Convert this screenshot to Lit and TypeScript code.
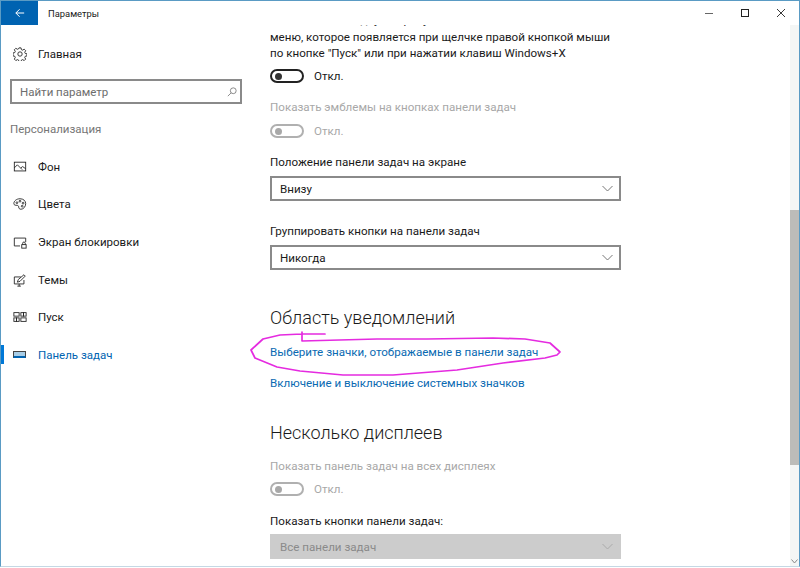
import { LitElement, html, css, svg } from "lit";
import { customElement } from "lit/decorators.js";

const ic = (body: unknown) => html`<svg class="ic" viewBox="0 0 16 16" fill="none" stroke="#222" stroke-width="1">${body}</svg>`;

const navItems = [
  { t: "Фон", i: svg`<rect x="1.500" y="2.500" width="13" height="10"/><path d="M1.500 9 5 5.500 10.500 11M9 9l2-1.500 3.500 2.500"/>` },
  { t: "Цвета", i: svg`<path d="M8 2C4 2 1 4.600 1 7.500c0 2 2 2 3.500 2 1.500 0 2 1 2 2 0 1.500 1 2.500 2.500 2.500 3 0 5.500-3 5.500-6.500C14.500 4.500 12 2 8 2z"/><circle cx="4.500" cy="6.500" r="1"/><circle cx="8" cy="4.800" r="1"/><circle cx="11.500" cy="7" r="1"/><circle cx="10.500" cy="10.500" r="1"/>` },
  { t: "Экран блокировки", i: svg`<path d="M8 12.500H1.500v-9h13V8"/><rect x="10" y="11" width="5" height="4"/><path d="M11 11V9.500a1.500 1.500 0 0 1 3 0V11"/>` },
  { t: "Темы", i: svg`<path d="M9 4.500H1.500v8h11V8M5 15h4M7 12.500V15"/><path d="M5 10.500l1-3 6.500-5.500 1.500 1.500L8 9.500z"/>` },
  { t: "Пуск", i: svg`<rect x="1" y="3" width="6" height="4"/><rect x="9" y="3" width="3" height="4"/><rect x="12" y="3" width="3" height="4"/><rect x="1" y="9" width="3" height="4"/><rect x="4" y="9" width="3" height="4"/><rect x="9" y="9" width="6" height="4"/>` },
];

@customElement("app-root")
export class AppRoot extends LitElement {
  static styles = css`
    :host {
      display: block;
      width: 800px;
      height: 568px;
      overflow: hidden;
      position: relative;
      background: #fff;
      font-family: Roboto, "Open Sans", sans-serif;
      font-size: 11.6px;
      color: #1a1a1a;
    }
    .win {
      box-sizing: border-box;
      height: 567px;
      display: flex;
      flex-direction: column;
      border: 1px solid #5a9bc4;
      border-bottom-color: #c5d8e4;
      overflow: hidden;
    }
    .title { height: 24px; flex: none; display: flex; align-items: center; background: #fff; position: relative; z-index: 1; }
    .back { width: 37px; height: 24px; background: #0063b1; display: flex; align-items: center; justify-content: center; }
    .back svg { width: 10px; height: 10px; }
    .title-text { margin-left: 10px; font-size: 9.4px; flex: 1; }
    .wbtn { width: 36px; height: 24px; display: flex; align-items: center; justify-content: center; }
    .wbtn svg { width: 8px; height: 8px; }
    .body { flex: 1; display: flex; min-height: 0; }
    .side { width: 269px; flex: none; display: flex; flex-direction: column; font-size: 11.5px; }
    .home { display: flex; align-items: center; gap: 11px; margin: 19px 0 0 12px; height: 20px; }
    .ic { width: 14px; height: 14px; flex: none; }
    .search {
      box-sizing: border-box; margin: 15px 0 0 9px; width: 232px; height: 25px;
      border: 2px solid #8a8a8a; display: flex; align-items: center; justify-content: space-between;
      padding: 0 3px 0 8px; color: #6d6d6d;
    }
    .search svg { width: 10px; height: 10px; }
    .group { margin: 16px 0 0 9px; color: #767676; height: 18px; line-height: 18px; }
    .nav { margin-top: 10px; display: flex; flex-direction: column; }
    .item { height: 37.6px; display: flex; align-items: center; gap: 11px; padding-left: 12px; position: relative; }
    .item.on { color: #0063b1; }
    .item.on::before { content: ""; position: absolute; left: -1px; top: 9px; width: 4px; height: 19px; background: #0078d7; }
    .bar-ic { width: 13px; height: 7px; box-sizing: border-box; border: 1px solid #444; border-bottom: 2px solid #0063b1; background: #a8cde6; margin-right: 1px; }
    .main { flex: 1; min-width: 0; overflow: hidden; position: relative; }
    .scroll { width: 352px; margin-top: -13px; display: flex; flex-direction: column; }
    .para { line-height: 16.5px; white-space: nowrap; }
    .toggle { display: flex; align-items: center; gap: 10px; height: 20px; }
    .sw { box-sizing: border-box; width: 34px; height: 14px; border: 2px solid #222; border-radius: 7px; position: relative; }
    .sw::after { content: ""; position: absolute; left: 3px; top: 1.5px; width: 7px; height: 7px; border-radius: 50%; background: #333; }
    .off { color: #a8a8a8; }
    .off .sw { border-color: #b0b0b0; }
    .off .sw::after { background: #a8a8a8; }
    .sel {
      box-sizing: border-box; width: 351px; height: 25px; border: 2px solid #8a8a8a; display: flex; align-items: center;
      justify-content: space-between; padding: 0 6px 0 8px;
    }
    .sel svg { width: 11px; height: 7px; }
    .sel.dis { background: #ccc; border-color: #ccc; color: #8a8a8a; }
    h2 { margin: 0; font-weight: 300; font-size: 18px; line-height: 26px; color: #1a1a1a; }
    a { color: #0a6ab2; text-decoration: none; line-height: 17px; display: block; white-space: nowrap; }
    .m5 { margin-top: 4.75px; } .m6 { margin-top: 5.75px; } .m12 { margin-top: 12.75px; } .m13 { margin-top: 13.75px; }
    .m4 { margin-top: 4.5px; } .m22 { margin-top: 21.75px; } .m35 { margin-top: 35px; } .ml1 { margin-top: 12.5px; }
    .ml2 { margin-top: 14px; } .m28 { margin-top: 28.5px; } .m11 { margin-top: 11.75px; }
    .rail { width: 9px; flex: none; position: relative; background: #f4f6f5; }
    .thumb { position: absolute; left: 0; right: 0; top: 185px; height: 255px; background: #bcbcb9; }
    .rail svg { position: absolute; left: 1px; bottom: 2px; width: 7px; height: 5px; }
    .ink { position: absolute; left: 0; top: 0; width: 800px; height: 568px; pointer-events: none; }
  `;
  render() {
    const chev = (c: string) => html`<svg viewBox="0 0 11 7" fill="none" stroke=${c} stroke-width="1"><path d="M.5 1 5.5 6l5-5"/></svg>`;
    return html`<div class="win">
      <div class="title">
        <div class="back"><svg viewBox="0 0 12 12" fill="none" stroke="#fff" stroke-width="1.200"><path d="M11 6H1M5.500 1.500 1 6l4.500 4.500"/></svg></div>
        <div class="title-text">Параметры</div>
        <div class="wbtn"><svg viewBox="0 0 8 8" stroke="#666"><path d="M0 4.500h8"/></svg></div>
        <div class="wbtn"><svg viewBox="0 0 8 8" fill="none" stroke="#222"><rect x=".5" y=".5" width="7" height="7"/></svg></div>
        <div class="wbtn"><svg viewBox="0 0 8 8" fill="none" stroke="#222" stroke-width=".9"><path d="M0 0l8 8M8 0 0 8"/></svg></div>
      </div>
      <div class="body">
        <div class="side">
          <div class="home">${ic(svg`<circle cx="8" cy="8" r="2.500"/><path d="M6.800 1h2.400l.4 2 1.400.6 1.800-1.100 1.700 1.700-1.100 1.800.6 1.400 2 .4v2.400l-2 .4-.6 1.400 1.100 1.800-1.700 1.700-1.800-1.100-1.400.6-.4 2H6.800l-.4-2-1.400-.6-1.800 1.100-1.700-1.700 1.100-1.800-.6-1.400-2-.4V6.800l2-.4.600-1.400-1.100-1.800 1.700-1.700 1.800 1.100 1.400-.6z"/>`)}<span>Главная</span></div>
          <div class="search"><span>Найти параметр</span><svg viewBox="0 0 12 12" fill="none" stroke="#777"><circle cx="7.500" cy="4.500" r="3.500"/><path d="M5 7 1 11"/></svg></div>
          <div class="group">Персонализация</div>
          <div class="nav">
            ${navItems.map((n) => html`<div class="item">${ic(n.i)}<span>${n.t}</span></div>`)}
            <div class="item on"><div class="bar-ic"></div><span>Панель задач</span></div>
          </div>
        </div>
        <div class="main">
          <div class="scroll">
            <div class="para">Заменить командную строку оболочкой Windows PowerShell в<br>меню, которое появляется при щелчке правой кнопкой мыши<br>по кнопке "Пуск" или при нажатии клавиш Windows+X</div>
            <div class="toggle m4"><div class="sw"></div>Откл.</div>
            <div class="para off m12">Показать эмблемы на кнопках панели задач</div>
            <div class="toggle off m6"><div class="sw"></div>Откл.</div>
            <div class="para m12">Положение панели задач на экране</div>
            <div class="sel m6"><span>Внизу</span>${chev("#777")}</div>
            <div class="para m22">Группировать кнопки на панели задач</div>
            <div class="sel m6"><span>Никогда</span>${chev("#777")}</div>
            <h2 class="m35">Область уведомлений</h2>
            <a class="ml1">Выберите значки, отображаемые в панели задач</a>
            <a class="ml2">Включение и выключение системных значков</a>
            <h2 class="m28">Несколько дисплеев</h2>
            <div class="para off m11">Показать панель задач на всех дисплеях</div>
            <div class="toggle off m5"><div class="sw"></div>Откл.</div>
            <div class="para m13">Показать кнопки панели задач:</div>
            <div class="sel dis m5"><span>Все панели задач</span>${chev("#aaa")}</div>
          </div>
        </div>
        <div class="rail"><div class="thumb"></div><svg viewBox="0 0 7 5" fill="none" stroke="#888"><path d="M.5.500 3.500 4l3-3.500"/></svg></div>
      </div>
    </div>
    <svg class="ink" viewBox="0 0 800 568" fill="none" stroke="#e52be0" stroke-width="1.700" stroke-linejoin="round" stroke-linecap="round">
      <path d="M325 334 L302 334 L280 335 L263 339 L251 350 L255 358 L277 367 L300 371 L343 375 L393 375 L457 370 L503 363 L545 358 L557 355 L560 352 L550 343 L525 339 L493 338 L427 339 L377 339 L302 341 L302 332"/>
    </svg>`;
  }
}
